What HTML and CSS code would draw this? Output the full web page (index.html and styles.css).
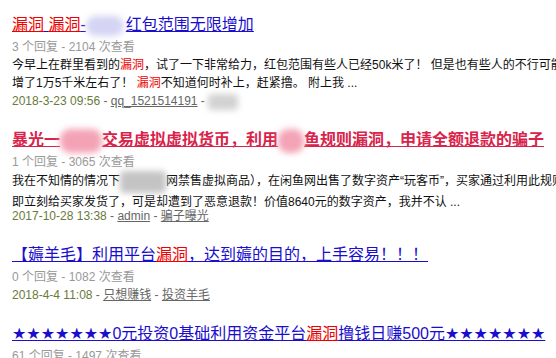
FILE: index.html
```html
<!DOCTYPE html>
<html lang="zh-CN">
<head>
  <meta charset="UTF-8">
  <title>搜索结果 - 漏洞</title>
  <link rel="stylesheet" href="styles.css">
</head>
<body>
  <ul class="results">
    <li class="item">
      <h3 class="title"><a href="#"><em>漏洞</em> <em>漏洞</em>-<span class="blur blur-lilac"></span>红包范围无限增加</a></h3>
      <p class="meta">3 个回复 - 2104 次查看</p>
      <p class="summary">今早上在群里看到的<em>漏洞</em>，试了一下非常给力，红包范围有些人已经50k米了！ 但是也有些人的不行可能只<br>增了1万5千米左右了！ <em>漏洞</em>不知道何时补上，赶紧撸。 附上我 ...</p>
      <p class="info"><span class="date">2018-3-23 09:56</span> - <a href="#">qq_1521514191</a> - <span class="blur blur-grey"></span></p>
    </li>
    <li class="item">
      <h3 class="title hot"><a href="#">暴光一<span class="blur blur-pink"></span>交易虚拟虚拟货币，利用<span class="blur blur-pink small"></span>鱼规则漏洞，申请全额退款的骗子</a></h3>
      <p class="meta">1 个回复 - 3065 次查看</p>
      <p class="summary">我在不知情的情况下<span class="blur blur-grey wide"></span>网禁售虚拟商品），在闲鱼网出售了数字资产“玩客币”，买家通过利用此规则<br>即立刻给买家发货了，可是却遭到了恶意退款！价值8640元的数字资产，我并不认 ...</p>
      <p class="info"><span class="date">2017-10-28 13:38</span> - <a href="#">admin</a> - <a href="#">骗子曝光</a></p>
    </li>
    <li class="item">
      <h3 class="title"><a href="#">【薅羊毛】利用平台<em>漏洞</em>，达到薅的目的，上手容易！！！</a></h3>
      <p class="meta">0 个回复 - 1082 次查看</p>
      <p class="info"><span class="date">2018-4-4 11:08</span> - <a href="#">只想赚钱</a> - <a href="#">投资羊毛</a></p>
    </li>
    <li class="item">
      <h3 class="title"><a href="#">★★★★★★★0元投资0基础利用资金平台<em>漏洞</em>撸钱日赚500元★★★★★★★</a></h3>
      <p class="meta">61 个回复 - 1497 次查看</p>
    </li>
  </ul>
</body>
</html>
```

FILE: styles.css
```css
body {
  margin: 0;
  background: #fff;
  font-family: "Liberation Sans", "DejaVu Sans", "Noto Sans CJK SC", sans-serif;
  color: #222;
  overflow: hidden;
}
.results {
  list-style: none;
  margin: 0;
  padding: 14px 0 0 12px;
  width: 640px;
}
.item {
  margin-bottom: 19px;
}
.title {
  margin: 0 0 2px;
  height: 22px;
  font-size: 16px;
  font-weight: normal;
  line-height: 22px;
  white-space: nowrap;
}
.title a {
  color: #1a0dcc;
  text-decoration: underline;
}
.title em {
  font-style: normal;
  color: #e00;
  text-decoration: underline;
}
.title.hot a {
  color: #d8234a;
  font-weight: bold;
}
.meta {
  margin: 0;
  height: 18px;
  font-size: 12px;
  line-height: 18px;
  color: #999;
}
.summary {
  margin: 0;
  height: 36px;
  font-size: 12px;
  line-height: 18px;
  color: #111;
  white-space: nowrap;
}
.summary em {
  font-style: normal;
  color: #e00;
}
.info {
  margin: 0;
  height: 18px;
  font-size: 12px;
  line-height: 18px;
  color: #666;
}
.info .date {
  color: #687a3c;
}
.info a {
  color: #666;
  text-decoration: underline;
}
.blur {
  display: inline-block;
  width: 38px;
  height: 20px;
  vertical-align: middle;
  border-radius: 10px;
  filter: blur(3px);
}
.blur-lilac {
  background: #d4d4f4;
  margin-right: 2px;
}
.blur-pink {
  width: 42px;
  height: 24px;
  background: #f4a3b6;
}
.blur-pink.small {
  width: 26px;
}
.blur-grey {
  width: 30px;
  height: 16px;
  background: #d2d2d2;
  border-radius: 4px;
}
.blur-grey.wide {
  width: 46px;
  height: 22px;
  background: #c4c4c4;
}
```
